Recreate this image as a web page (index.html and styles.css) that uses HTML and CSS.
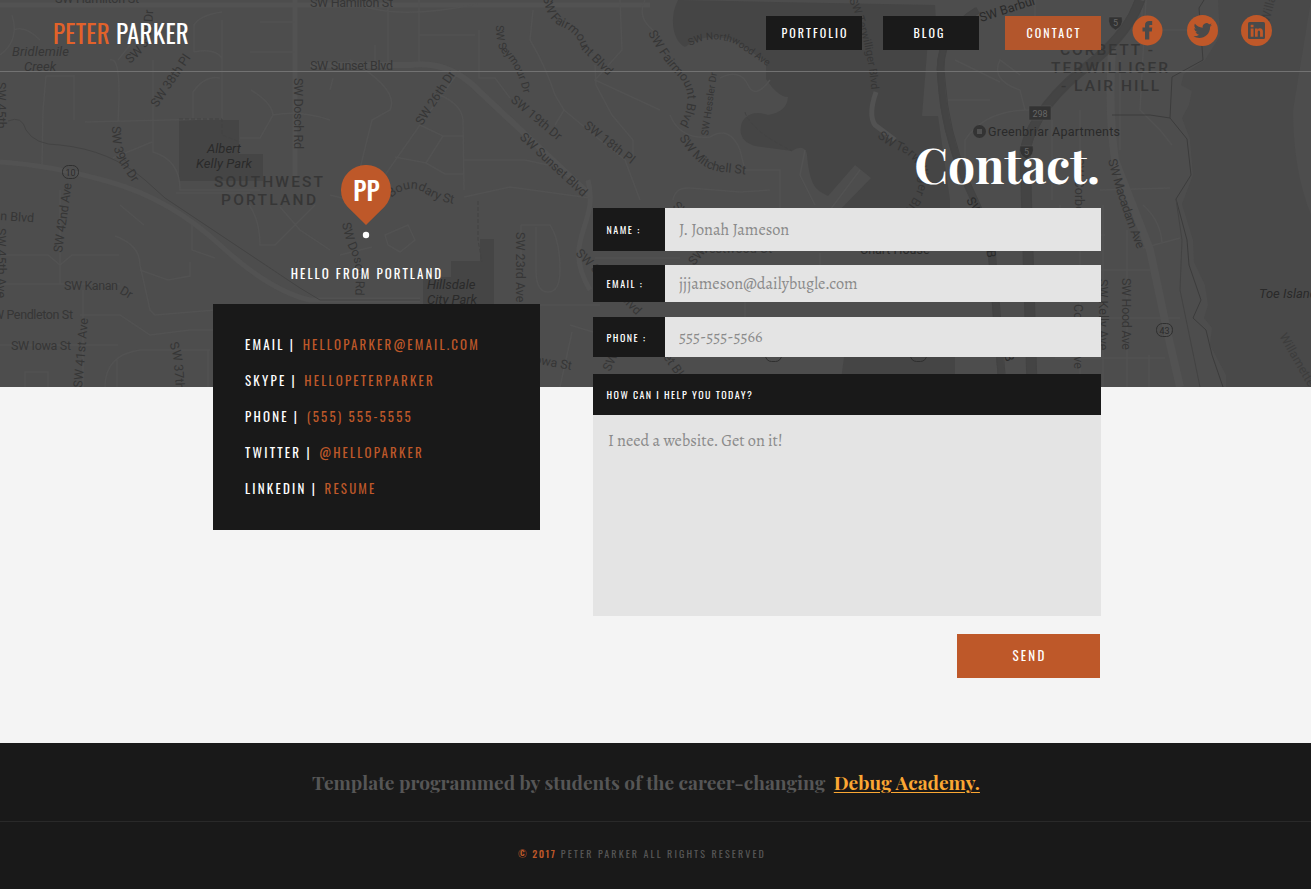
FILE: index.html
```
<!DOCTYPE html>
<html lang="en">
<head>
<meta charset="utf-8">
<title>Peter Parker – Contact</title>
<link rel="stylesheet" href="styles.css">
</head>
<body>
<svg class="map" viewBox="0 0 1311 387" width="1311" height="387" aria-hidden="true">
  <defs>
    <path id="p1" d="M130 64Q144 52 149 42Q153 28 153 6"/>
    <path id="p2" d="M112 126Q112 150 119 162L140 194"/>
    <path id="p3" d="M169 344Q175 352 176 400"/>
    <path id="p4" d="M496 25Q496 50 505 55Q518 68 524 95"/>
    <path id="p5" d="M543 -3Q547 20 560 26Q578 33 582 50L612 80"/>
    <path id="p6" d="M648 33Q662 60 678 76Q696 95 680 124"/>
    <path id="p7" d="M690 46Q712 34 735 44L770 68"/>
    <path id="p8" d="M679 138Q700 172 724 172L760 176"/>
    <path id="p9" d="M849 0Q868 40 872 98"/>
    <path id="p10" d="M877 137Q890 148 905 153Q935 175 903 212L870 250"/>
    <path id="p11" d="M391 198Q410 182 426 194Q440 202 455 204"/>
    <path id="p12" d="M342 223Q346 245 353 256Q357 270 355 300"/>
    <path id="p13" d="M1108 160Q1122 215 1142 260"/>
  </defs>
  <rect width="1311" height="387" fill="#4d4d4d"/>
  <g fill="#454545">
    <path d="M179 120h60v34h24v27h-84z"/>
    <path d="M451 261h29v-22h14v70h-71v-32h28z"/>
    <path d="M678 0C668 20 674 42 685 47Q710 28 740 44L766 62V79Q778 97 788 97Q787 112 768 115Q750 109 742 122Q736 140 755 146L792 151Q805 143 807 155C810 190 818 190 828 196L855 165L871 178L835 215L800 230H950V200L938 116H922L928 40H937L935 5Z"/>
    <path d="M845 350h110v37H840z"/>
  </g>
  <path fill="#494949" d="M1218 0L1220 36L1205 60L1184 74L1181 85L1192 91L1189 105L1182 118L1190 139L1193 175L1182 204L1193 240L1194 262L1205 285L1208 305L1204 318L1212 328L1210 345L1226 375V387H1311V215Q1293 170 1293 110L1311 0Z"/>
  <g class="road">
    <path d="M0 5H650M295 0V180M0 162Q50 165 110 182T220 245T310 300H420"  stroke-width="5"/>
    <path d="M310 65H410Q450 60 480 92L590 195" stroke-width="6"/>
    <path d="M588 180C600 225 560 240 590 290" stroke-width="5"/>
    <path d="M74 75V120M46 76H74M46 76L43 110L42 165M110 60Q122 55 118 122M85 122L210 119M153 60V152Q180 160 180 190H260M193 119V92Q205 75 220 78M222 20V120M194 52L194 25Q200 15 222 12M194 52Q215 48 222 58M250 52H295M260 22H295M251 90Q272 103 273 115L260 138H240M273 115Q300 110 330 120M0 55Q20 40 12 15M14 30Q25 25 40 40M130 45L118 60M113 158L152 142"/>
    <path d="M388 0V62M419 0V62M419 35H475M479 30V78H495L510 98M330 90L333 78M375 45V62M350 60Q400 90 390 110L372 120Q362 160 355 190M460 70L420 125L385 175M440 95Q462 105 463 120L464 190M420 125L443 136L426 163L395 157M443 136H463M426 163L445 174H463M464 160H525L548 165M533 10L530 40Q545 65 555 95L564 110L555 125M564 110L600 140L625 160L640 200M595 65L596 85L612 115L633 140V160M620 0L622 50L595 80L660 110M645 0Q635 20 660 35M360 5Q400 20 478 4"/>
    <path d="M0 255H48L60 265L72 255H119M0 284H120M60 190V284M80 315H120L150 335L190 330L215 330M83 290V387M115 236Q140 245 140 265L150 310L155 315L215 310M140 270L168 280L190 276V262M0 345H118M105 387Q105 355 140 350H210M25 387V372H48V387M117 360V387M208 350V387M120 205L144 225M192 225V250L215 258M248 203Q260 220 260 245H275L315 205M280 207L300 230L330 250M176 193H250"/>
    <path d="M330 195L370 205M464 197L510 187L590 198M521 225H550Q560 240 560 270Q560 292 548 292Q536 292 536 270V227M521 225V270M494 305H600M385 235L408 225L415 240L400 252L388 245ZM340 255L372 247M572 332L560 387M570 325L593 332"/>
    <path d="M670 115Q680 140 710 137Q730 125 740 150L745 170H780V210M673 200Q675 187 690 188L740 192L770 190M720 78Q740 68 748 85Q755 100 770 80M805 150L800 175L815 205M860 170L830 210M595 258H680M820 253V265M745 275V317M1000 365L1010 350"/>
    <path d="M1035 0V40L1013 45V20M955 60L1000 82M948 100H990M965 180V140Q985 110 1030 110M1020 75L1000 60Q990 80 1020 90L1025 110M1052 120V200M1080 110V205M1105 235H1060V205M1120 60V150M1100 190L1170 188M1146 0L1140 110L1160 130L1172 145M1060 270H1150M1070 318H1180M1055 358H1165M1127 230V387M1103 205V387M1080 250V387M1142 0V30H1190M1143 248L1180 238M1143 205Q1160 220 1162 242M1149 355V387"/>
    <path d="M1112 50Q1108 110 1115 160L1150 250L1168 335L1180 387" stroke-width="8"/>
    <path d="M876 92Q868 115 875 125L895 140" stroke-width="5"/>
  </g>
  <g class="rail">
    <path d="M8 121Q22 115 26 130Q35 145 60 145Q110 150 145 180L165 198L300 288L320 300H420"/>
    <path d="M179 119H222V135L240 142M478 201V240L482 262M745 112Q750 130 792 151" stroke-dasharray="4 2"/>
    <path d="M1204 0L1199 8L1203 60L1172 77L1170 118L1187 139L1191 175L1176 199L1187 240L1189 265L1201 300L1193 318L1206 330L1212 355L1223 387M1112 115H1150L1170 118" class="shore"/>
    <path d="M1176 199L1182 240L1180 290L1200 387"/>
    <path d="M1140 0Q1130 30 1095 60Q1035 105 1025 150L1032 387" stroke="#444" stroke-width="10"/>
    <path d="M1135 0Q1125 30 1090 60Q1030 105 1020 150L1027 387M1145 0Q1135 30 1100 60Q1040 105 1030 150L1037 387"/>
    <path d="M978 10Q935 35 941 80Q944 130 965 180L990 235L1002 387" stroke="#444" stroke-width="7"/>
    <path d="M975 8Q932 35 938 80Q941 130 962 180L987 235L999 387M981 12Q938 35 945 80Q948 130 969 180L994 235L1006 387"/>
  </g>
  <g class="street">
    <text x="55" y="3" textLength="84">SW Hamilton St</text>
    <text x="310" y="7" textLength="83">SW Hamilton St</text>
    <text x="310" y="70" textLength="83">SW Sunset Blvd</text>
    <text><textPath href="#p1">SW 39th Dr</textPath></text>
    <text transform="translate(157 108) rotate(-56)">SW 38th Pl</text>
    <text transform="translate(294 78) rotate(90)" textLength="71">SW Dosch Rd</text>
    <text><textPath href="#p2">SW 39th Dr</textPath></text>
    <text transform="translate(62 253) rotate(-82)" textLength="70">SW 42nd Ave</text>
    <text transform="translate(0 220) rotate(4)">n Blvd</text>
    <text transform="translate(-3 228) rotate(90)">SW 45th Ave</text>
    <text transform="translate(-3 82) rotate(90)">SW 45th</text>
    <text x="64" y="290" textLength="54">SW Kanan</text>
    <text transform="translate(119 293) rotate(30)">Dr</text>
    <text x="-7" y="319" textLength="80">W Pendleton St</text>
    <text x="11" y="350" textLength="60">SW Iowa St</text>
    <text transform="translate(82 388) rotate(-85)">SW 41st Ave</text>
    <text><textPath href="#p3">SW 37th Ave</textPath></text>
    <text transform="translate(422 126) rotate(-57)">SW 26th Dr</text>
    <text class="small"><textPath href="#p4">SW Seymour Dr</textPath></text>
    <text><textPath href="#p5">SW Fairmount Blvd</textPath></text>
    <text transform="translate(510 101) rotate(40)">SW 19th Dr</text>
    <text transform="translate(519 138) rotate(43)">SW Sunset Blvd</text>
    <text transform="translate(583 127) rotate(38)">SW 18th Pl</text>
    <text><textPath href="#p11">Boundary St</textPath></text>
    <text><textPath href="#p12">SW Dosch Rd</textPath></text>
    <text transform="translate(516 232) rotate(90)">SW 23rd Ave</text>
    <text transform="translate(509 359) rotate(10)">SW Iowa St</text>
    <text transform="translate(575 254) rotate(45)">SW Sunset Blvd</text>
    <text><textPath href="#p6">SW Fairmount Blvd</textPath></text>
    <text class="tiny"><textPath href="#p7">SW Northwood Ave</textPath></text>
    <text class="tiny" transform="translate(708 136) rotate(-82)">SW Hessler Dr</text>
    <text><textPath href="#p8">SW Mitchell St</textPath></text>
    <text class="small"><textPath href="#p9">SW Terwilliger Blvd</textPath></text>
    <text><textPath href="#p10">SW Terwilliger Blvd</textPath></text>
    <text class="dark" transform="translate(981 22) rotate(-18)">SW Barbur</text>
    <text transform="translate(672 207) rotate(42)">SW</text>
    <text transform="translate(694 266) rotate(-50)">SW</text>
    <text x="698" y="253">Westwood Ct</text>
    <text class="dark" x="860" y="254">Chart House</text>
    <text class="dark" transform="translate(966 200) rotate(62)">SW</text>
    <text class="dark" transform="translate(985 236) rotate(84)">ur B</text>
    <text class="dark" transform="translate(998 334) rotate(74)">SW B</text>
    <text transform="translate(610 372) rotate(-65)">SW</text>
    <text transform="translate(663 357) rotate(55)">et Blvd</text>
    <text transform="translate(1075 158) rotate(90)">SW Corbett</text>
    <text transform="translate(1074 304) rotate(90)">Corbett Ave</text>
    <text><textPath href="#p13" textLength="94">SW Macadam Ave</textPath></text>
    <text transform="translate(1122 278) rotate(90)" textLength="72">SW Hood Ave</text>
    <text transform="translate(1099 279) rotate(90)">SW Kelly Ave</text>
    <text class="dark" x="988" y="136" textLength="132">Greenbriar Apartments</text>
    <text class="dim" transform="translate(1279 336) rotate(60)">Willamette</text>
    <text class="dim" transform="translate(1269 23) rotate(-75)">Willa</text>
    <g class="park">
      <text x="12" y="56" textLength="57">Bridlemile</text><text x="24" y="71">Creek</text>
      <g class="dark"><text x="207" y="153">Albert</text><text x="196" y="168" textLength="56">Kelly Park</text>
      <text x="427" y="289">Hillsdale</text><text x="427" y="304">City Park</text>
      <text x="1259" y="298">Toe Island</text></g>
    </g>
  </g>
  <g class="district">
    <text x="214" y="187" textLength="109">SOUTHWEST</text><text x="221" y="205" textLength="95">PORTLAND</text>
    <text x="1060" y="55" textLength="93">CORBETT -</text><text x="1051" y="73" textLength="117">TERWILLIGER</text>
    <text x="1061" y="91" textLength="98">- LAIR HILL</text>
  </g>
  <g class="sign">
    <rect x="62.500" y="165.500" width="16" height="13" rx="6"/><text x="70.500" y="176">10</text>
    <rect x="1156.500" y="323.500" width="16" height="13" rx="6"/><text x="1164.500" y="334">43</text>
    <rect x="765.500" y="348.500" width="16" height="13" rx="6"/><rect x="910.500" y="348.500" width="16" height="13" rx="6"/>
    <g class="solid"><rect x="1029" y="106" width="22" height="14"/><text x="1040" y="117">298</text>
    <path d="M1109 17h13q2 9-6.500 13q-8.500-4-6.500-13zM1020 146h13q2 9-6.500 13q-8.500-4-6.500-13z"/><text x="1115.500" y="26">5</text><text x="1026.500" y="155">5</text></g>
  </g>
  <circle cx="979.500" cy="131.500" r="6.500" fill="#333"/><rect x="977" y="129" width="5" height="5" fill="#505050"/>
</svg>

<header class="top">
  <a class="logo"><span>PETER</span> PARKER</a>
  <nav>
    <a class="btn">PORTFOLIO</a><a class="btn blog">BLOG</a><a class="btn active">CONTACT</a>
  </nav>
  <div class="social">
    <svg class="fb" width="31" height="31" viewBox="0 0 31 31"><circle cx="15.500" cy="15.500" r="15"/><path d="M13 24.500V16.500H10.500V12.500h2.500V10.300C13 7.300 14.800 6 17.300 6h2.900V9.900H18.500c-1 0-1.200.4-1.200 1.200v1.400h2.900L19.800 16.500H17.300v8z"/></svg>
    <svg width="31" height="31" viewBox="0 0 31 31"><circle cx="15.500" cy="15.500" r="15.500"/><path d="M25 9.800c-.7.300-1.400.5-2.100.6.800-.5 1.300-1.200 1.600-2-.7.400-1.500.7-2.400.9A3.800 3.800 0 0 0 15.700 12.800c-3.200-.2-6-1.700-7.800-4-1 1.700-.5 3.900 1.100 5-.6 0-1.200-.2-1.700-.5 0 1.800 1.300 3.400 3 3.700-.5.200-1.100.2-1.700.1.500 1.500 1.900 2.600 3.500 2.600A7.600 7.600 0 0 1 6.500 21.300c6.500 4.200 16.700.6 16.600-9.500.8-.6 1.400-1.200 1.900-2z"/></svg>
    <svg width="31" height="31" viewBox="0 0 31 31"><circle cx="15.500" cy="15.500" r="15.500"/><path fill-rule="evenodd" d="M8.500 7h14q1.500 0 1.500 1.500v14q0 1.500-1.500 1.500h-14q-1.500 0-1.500-1.500v-14q0-1.500 1.500-1.500z"/><path class="in" d="M9.700 13.500h2.800v8.300H9.700zM9.700 9.800h2.800v2.500H9.700zM14 13.500h2.600v1q.8-1.200 2.300-1.200 3 0 3 3.500v5h-2.800v-4.500q0-1.700-1.200-1.700-1.200 0-1.200 1.700v4.500H14z"/></svg>
  </div>
</header>

<main>
  <section class="info">
    <div class="hello">
      <svg class="pin" width="50" height="74" viewBox="0 0 50 74"><path d="M25 60L6.500 41.800A25 25 0 1 1 43.500 41.800Z" fill="#be5829"/><circle cx="25" cy="70" r="3.200" fill="#fff"/><text x="25.500" y="36">PP</text></svg>
      <h2>HELLO FROM PORTLAND</h2>
    </div>
    <ul>
      <li>EMAIL |<a>HELLOPARKER@EMAIL.COM</a></li>
      <li>SKYPE |<a>HELLOPETERPARKER</a></li>
      <li>PHONE |<a>(555) 555-5555</a></li>
      <li>TWITTER |<a>@HELLOPARKER</a></li>
      <li>LINKEDIN |<a>RESUME</a></li>
    </ul>
  </section>
  <section class="contact">
    <h1>Contact.</h1>
    <form>
      <div class="row name"><label for="n">NAME :</label><input id="n" placeholder="J. Jonah Jameson"></div>
      <div class="row email"><label for="e">EMAIL :</label><input id="e" placeholder="jjjameson@dailybugle.com"></div>
      <div class="row phone"><label for="p">PHONE :</label><input id="p" placeholder="555-555-5566"></div>
      <label class="ask" for="m">HOW CAN I HELP YOU TODAY?</label>
      <textarea id="m" placeholder="I need a website. Get on it!"></textarea>
      <button type="button">SEND</button>
    </form>
  </section>
</main>

<footer>
  <p class="credit">Template programmed by students of the career-changing <a>Debug Academy.</a></p>
  <p class="copy"><b>© 2017</b> PETER PARKER ALL RIGHTS RESERVED</p>
</footer>
</body>
</html>
```
FILE: styles.css
```
* { box-sizing: border-box; margin: 0; padding: 0; }
body { position: relative; width: 1311px; height: 889px; background: #f4f4f4; font-family: Oswald, "Roboto Condensed", sans-serif; overflow: hidden; }

.map { position: absolute; top: 0; left: 0; z-index: -1; font-family: Roboto, sans-serif; }
.map .road { fill: none; stroke: #525252; stroke-width: 1.5; }
.map .rail { fill: none; stroke: #434343; stroke-width: 1; }
.map .shore { stroke: #3c3c3c; }
.map .street { fill: #363636; font-size: 12.5px; }
.map .small { font-size: 11px; }
.map .tiny { font-size: 10px; }
.map .dark { fill: #2a2a2a; }
.map .dim { fill: #3d3d3d; }
.map .park { font-style: italic; font-size: 13px; }
.map .district { fill: #363636; font-size: 15.5px; font-weight: 500; }
.map .sign { fill: none; stroke: #2f2f2f; font-size: 9px; text-anchor: middle; }
.map .sign text { stroke: none; fill: #2c2c2c; }
.map .solid rect, .map .solid path { fill: #333; stroke: #555; stroke-width: .5; }
.map .sign .solid text { fill: #666; }

.top { height: 72px; display: flex; align-items: flex-start; padding: 15px 39px 0 53px; border-bottom: 1px solid #727272; }
.logo { font-size: 25px; line-height: 36px; letter-spacing: .25px; color: #fff; white-space: pre; }
.logo span { color: #e2622a; }
nav { display: flex; margin: 1px 0 0 auto; }
.btn { width: 96px; height: 34px; line-height: 34px; padding-left: 2px; text-align: center; background: #1a1a1a; color: #fff; font-size: 12px; letter-spacing: 2.05px; }
.blog { margin: 0 26px 0 21px; padding: 0 3px 0 0; }
.active { background: #b3562c; }
.social { display: flex; gap: 23px; margin-left: 31px; }
.social svg { fill: #4a4a4a; }
.social circle, .social .in { fill: #bf5829; }
.social .fb { margin-right: 1px; }

main { display: grid; grid-template-columns: 327px 508px; column-gap: 53px; height: 671px; padding-left: 213px; }
.hello { height: 232px; padding: 93px 19px 0 0; text-align: center; }
.pin { display: block; margin-left: 128px; font-size: 25px; }
.pin text { fill: #fff; text-anchor: middle; font-weight: 500; }
.hello h2 { margin-top: 23px; line-height: 22px; font-weight: 400; font-size: 13px; letter-spacing: 2.05px; color: #fff; }
.info ul { list-style: none; height: 226px; background: #191919; padding: 22px 32px; }
.info li { line-height: 36px; font-size: 13px; letter-spacing: 2.2px; color: #fff; white-space: nowrap; }
.info a { margin-left: 7.5px; letter-spacing: 2.15px; color: #be5829; }

h1 { height: 136px; padding: 60px 1px 0 0; text-align: right; font: 700 48px/64px "Playfair Display", serif; color: #fff; }
.row { display: grid; grid-template-columns: 72px 436px; }
.row label, .ask { display: flex; align-items: center; padding-left: 13.5px; background: #191919; color: #fff; font-size: 10px; letter-spacing: 1.5px; }
input, textarea { display: block; border: 0; outline: 0; background: #e4e4e4; font: 16.3px Alegreya, serif; padding: 0 14px 1px; resize: none; }
::placeholder { color: #8a8a8a; opacity: 1; }
.name { height: 43px; margin-bottom: 14px; }
.email { height: 37px; margin-bottom: 15px; }
.phone { height: 40px; margin-bottom: 17px; }
.ask { height: 41px; padding-bottom: 1px; letter-spacing: 1.45px; }
textarea { width: 508px; height: 201px; padding: 14px 15px; }
button { display: block; margin: 18px 1px 0 auto; width: 143px; height: 44px; padding: 0 0 2px 2px; border: 0; background: #be5829; color: #fff; font: 13px Oswald, sans-serif; letter-spacing: 2.2px; }

footer { height: 146px; background: #191919; }
.credit { height: 79px; padding-left: 312px; border-bottom: 1px solid #292929; font: 700 19.15px/79px "Playfair Display", serif; color: #565656; white-space: nowrap; }
.credit a { margin-left: 4px; color: #fba733; text-decoration: underline; text-decoration-thickness: 1px; text-underline-offset: 2px; }
.copy { padding-left: 518px; font-size: 10px; line-height: 64px; letter-spacing: 2.1px; color: #565656; white-space: nowrap; }
.copy b { font-weight: 500; letter-spacing: 1.5px; color: #be5829; }
```
